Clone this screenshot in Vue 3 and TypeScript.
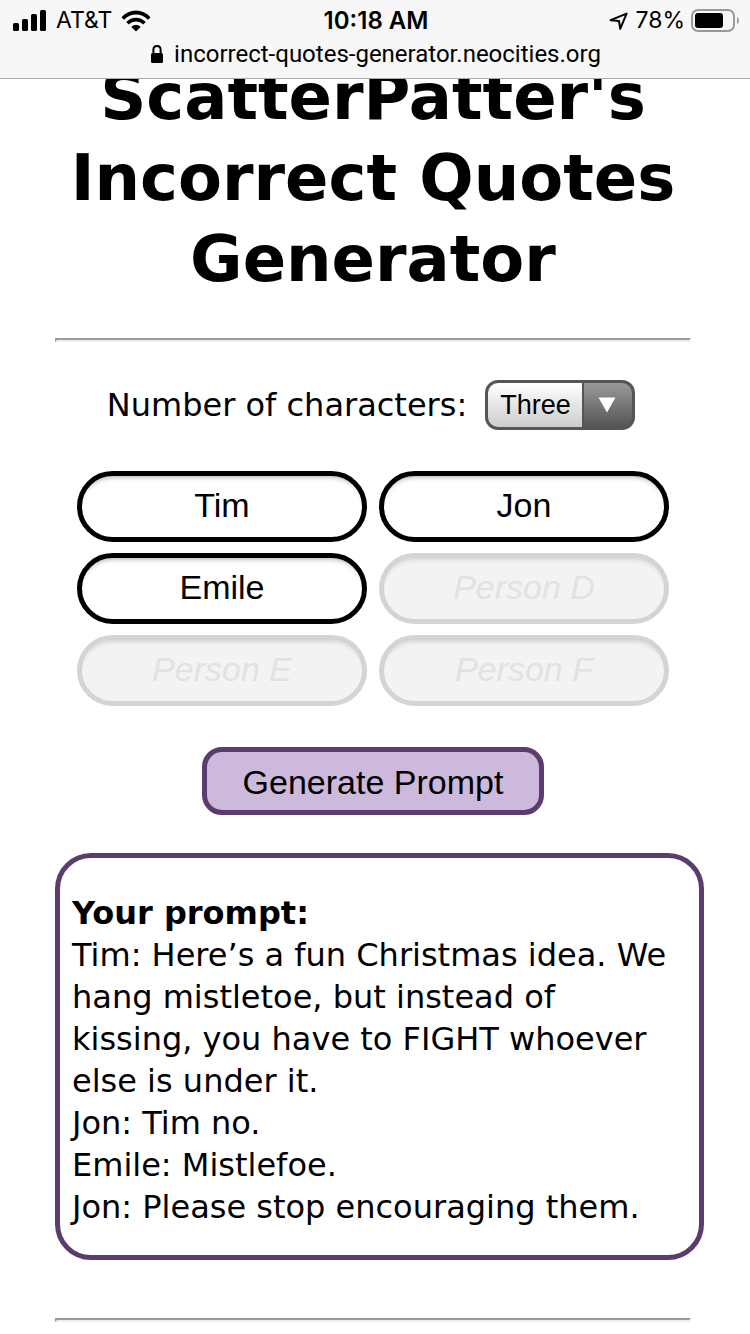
<script setup lang="ts">
import { computed, ref } from 'vue'

interface Person {
  placeholder: string
  name: string
}

interface Line {
  speaker: number
  text: string
}

const counts: string[] = ['One', 'Two', 'Three', 'Four', 'Five', 'Six']
const selected = ref<string>('Three')
const activeCount = computed<number>(() => counts.indexOf(selected.value) + 1)

const people = ref<Person[]>([
  { placeholder: 'Person A', name: 'Tim' },
  { placeholder: 'Person B', name: 'Jon' },
  { placeholder: 'Person C', name: 'Emile' },
  { placeholder: 'Person D', name: '' },
  { placeholder: 'Person E', name: '' },
  { placeholder: 'Person F', name: '' },
])

const script: Line[] = [
  {
    speaker: 0,
    text: 'Here’s a fun Christmas idea. We hang mistletoe, but instead of kissing, you have to FIGHT whoever else is under it.',
  },
  { speaker: 1, text: 'Tim no.' },
  { speaker: 2, text: 'Mistlefoe.' },
  { speaker: 1, text: 'Please stop encouraging them.' },
]

const render = (): string[] =>
  script.map((line) => `${people.value[line.speaker].name}: ${line.text}`)

const prompt = ref<string[]>(render())

function generate(): void {
  prompt.value = render()
}
</script>

<template>
  <div class="screen">
    <header class="browser">
      <div class="status">
        <div class="carrier">
          <svg class="signal" viewBox="0 0 34 22" aria-hidden="true">
            <rect x="0" y="13" width="6" height="8" rx="1.5" />
            <rect x="9" y="9" width="6" height="12" rx="1.5" />
            <rect x="18" y="4" width="6" height="17" rx="1.5" />
            <rect x="27" y="0" width="6" height="21" rx="1.5" />
          </svg>
          <span>AT&amp;T</span>
          <svg class="wifi" viewBox="0 0 30 22" aria-hidden="true">
            <path d="M0.5 7.2 C8.5 -1.6 21.5 -1.6 29.5 7.2 L27 9.8 C20.4 2.9 9.6 2.9 3 9.8 Z" />
            <path d="M5.2 12 C10.8 6.2 19.2 6.2 24.8 12 L22.2 14.6 C18.1 10.6 11.9 10.6 7.8 14.6 Z" />
            <path d="M10.3 17 C13 14.4 17 14.4 19.7 17 L15 21.6 Z" />
          </svg>
        </div>
        <strong class="clock">10:18 AM</strong>
        <div class="power">
          <svg class="location" viewBox="0 0 20 20" aria-hidden="true">
            <path d="M1.6 9.2 L17.6 2.6 L11.2 17.8 L10 10 Z" />
          </svg>
          <span>78%</span>
          <svg class="battery" viewBox="0 0 48 24" aria-hidden="true">
            <rect class="shell" x="1" y="1" width="42" height="21" rx="6" />
            <rect x="4" y="4" width="28" height="15" rx="3" />
            <path class="nub" d="M46 8 Q48 9 48 11.5 Q48 14 46 15 Z" />
          </svg>
        </div>
      </div>
      <div class="address">
        <svg class="lock" viewBox="0 0 12 18" aria-hidden="true">
          <path class="shackle" d="M2.4 9 V4.8 C2.4 -0.2 9.6 -0.2 9.6 4.8 V9" />
          <rect x="0" y="8" width="12" height="10" rx="1.5" />
        </svg>
        <span>incorrect-quotes-generator.neocities.org</span>
      </div>
    </header>

    <main class="page">
      <h1>ScatterPatter's Incorrect Quotes Generator</h1>
      <hr />

      <form @submit.prevent="generate">
        <div class="count">
          <label for="count">Number of characters:</label>
          <div class="picker">
            <select id="count" v-model="selected">
              <option v-for="c in counts" :key="c" :value="c">{{ c }}</option>
            </select>
            <svg class="arrow" viewBox="0 0 18 16" aria-hidden="true">
              <path d="M0.5 0.5 H17.5 L9 15.5 Z" />
            </svg>
          </div>
        </div>

        <div class="people">
          <input
            v-for="(p, i) in people"
            :key="p.placeholder"
            v-model="p.name"
            type="text"
            :aria-label="p.placeholder"
            :placeholder="p.placeholder"
            :disabled="i >= activeCount"
          />
        </div>

        <button type="submit">Generate Prompt</button>
      </form>

      <section class="prompt">
        <h2>Your prompt:</h2>
        <p v-for="(line, i) in prompt" :key="i">{{ line }}</p>
      </section>
      <hr />
    </main>
  </div>
</template>

<style>
body {
  margin: 0;
  background: #fff;
}
</style>

<style scoped>
* {
  box-sizing: border-box;
}

.screen {
  color: #000;
  font-family: Verdana, 'DejaVu Sans', sans-serif;
  font-size: 32px;
  line-height: 42px;
}

.browser {
  position: sticky;
  top: 0;
  z-index: 1;
  background: #f7f7f7;
  border-bottom: 1px solid #a9a9a9;
  padding: 4px 11px 7px 13px;
  font-family: Inter, sans-serif;
}

.status {
  display: grid;
  grid-template-columns: 1fr auto 1fr;
  align-items: center;
  font-size: 23px;
  line-height: 33px;
}

.carrier,
.power {
  display: flex;
  align-items: center;
}

.carrier {
  gap: 9px;
}

.power {
  justify-content: flex-end;
  gap: 6px;
}

.clock {
  font-size: 24px;
  font-weight: 600;
}

.signal {
  width: 34px;
  height: 22px;
}

.wifi {
  width: 30px;
  height: 22px;
}

.location {
  width: 20px;
  height: 20px;
  fill: none;
  stroke: #000;
  stroke-width: 2;
  stroke-linejoin: round;
}

.battery {
  width: 48px;
  height: 24px;
}

.shell {
  fill: none;
  stroke: #999;
  stroke-width: 2;
}

.nub {
  fill: #999;
}

.address {
  display: flex;
  justify-content: center;
  align-items: center;
  gap: 11px;
  font-family: Roboto, sans-serif;
  font-size: 24px;
  line-height: 34px;
}

.lock {
  width: 12px;
  height: 18px;
}

.shackle {
  fill: none;
  stroke: #000;
  stroke-width: 2;
}

.page {
  margin-top: -22px;
  padding: 0 59px 12px 55px;
}

h1 {
  margin: 0 0 38px;
  font-size: 64px;
  line-height: 81px;
  text-align: center;
}

hr {
  margin: 0;
  border: 2px solid;
  border-color: #9a9a9a #eee #eee #9a9a9a;
}

form {
  display: flex;
  flex-direction: column;
  align-items: center;
  padding: 38px 0;
}

.count {
  display: flex;
  align-items: center;
  gap: 18px;
  padding-right: 4px;
}

.picker {
  position: relative;
}

select {
  appearance: none;
  display: block;
  width: 150px;
  height: 50px;
  padding: 0 50px 0 12px;
  border: 3px solid #555;
  border-radius: 13px;
  background:
    linear-gradient(#555, #555) right 48px top / 2px 100% no-repeat,
    linear-gradient(#999, #555) right top / 48px 100% no-repeat,
    linear-gradient(#fff, #ccc);
  color: #000;
  font-family: 'Liberation Sans', Arial, sans-serif;
  font-size: 27px;
}

.arrow {
  position: absolute;
  top: 17px;
  right: 19px;
  width: 18px;
  height: 16px;
  fill: #fff;
  pointer-events: none;
}

.people {
  display: grid;
  grid-template-columns: repeat(2, 290px);
  gap: 11px 12px;
  margin: 41px 0;
}

input {
  width: 100%;
  height: 71px;
  padding: 0 12px 3px;
  border: 5px solid #000;
  border-radius: 36px;
  background: #fff;
  box-shadow: inset 0 6px 5px -5px #aaa;
  color: #000;
  font-family: 'Liberation Sans', Arial, sans-serif;
  font-size: 34px;
  text-align: center;
}

input:disabled {
  border-color: #d4d4d4;
  background: #f3f3f3;
  box-shadow: inset 0 6px 5px -5px #ccc;
}

input::placeholder {
  color: #e2e2e2;
  font-style: italic;
  opacity: 1;
}

button {
  padding: 10px 36px 8px;
  border: 5px solid #5a3d6e;
  border-radius: 20px;
  background: #cdb9db;
  color: #000;
  font-family: 'Liberation Sans', Arial, sans-serif;
  font-size: 34px;
  line-height: 40px;
}

.prompt {
  margin: 0 -13px 58px 0;
  padding: 34px 24px 27px 12px;
  border: 5px solid #5a3d6e;
  border-radius: 36px;
}

h2 {
  margin: 0;
  font-size: 32px;
  line-height: 42px;
}

p {
  margin: 0;
}
</style>
